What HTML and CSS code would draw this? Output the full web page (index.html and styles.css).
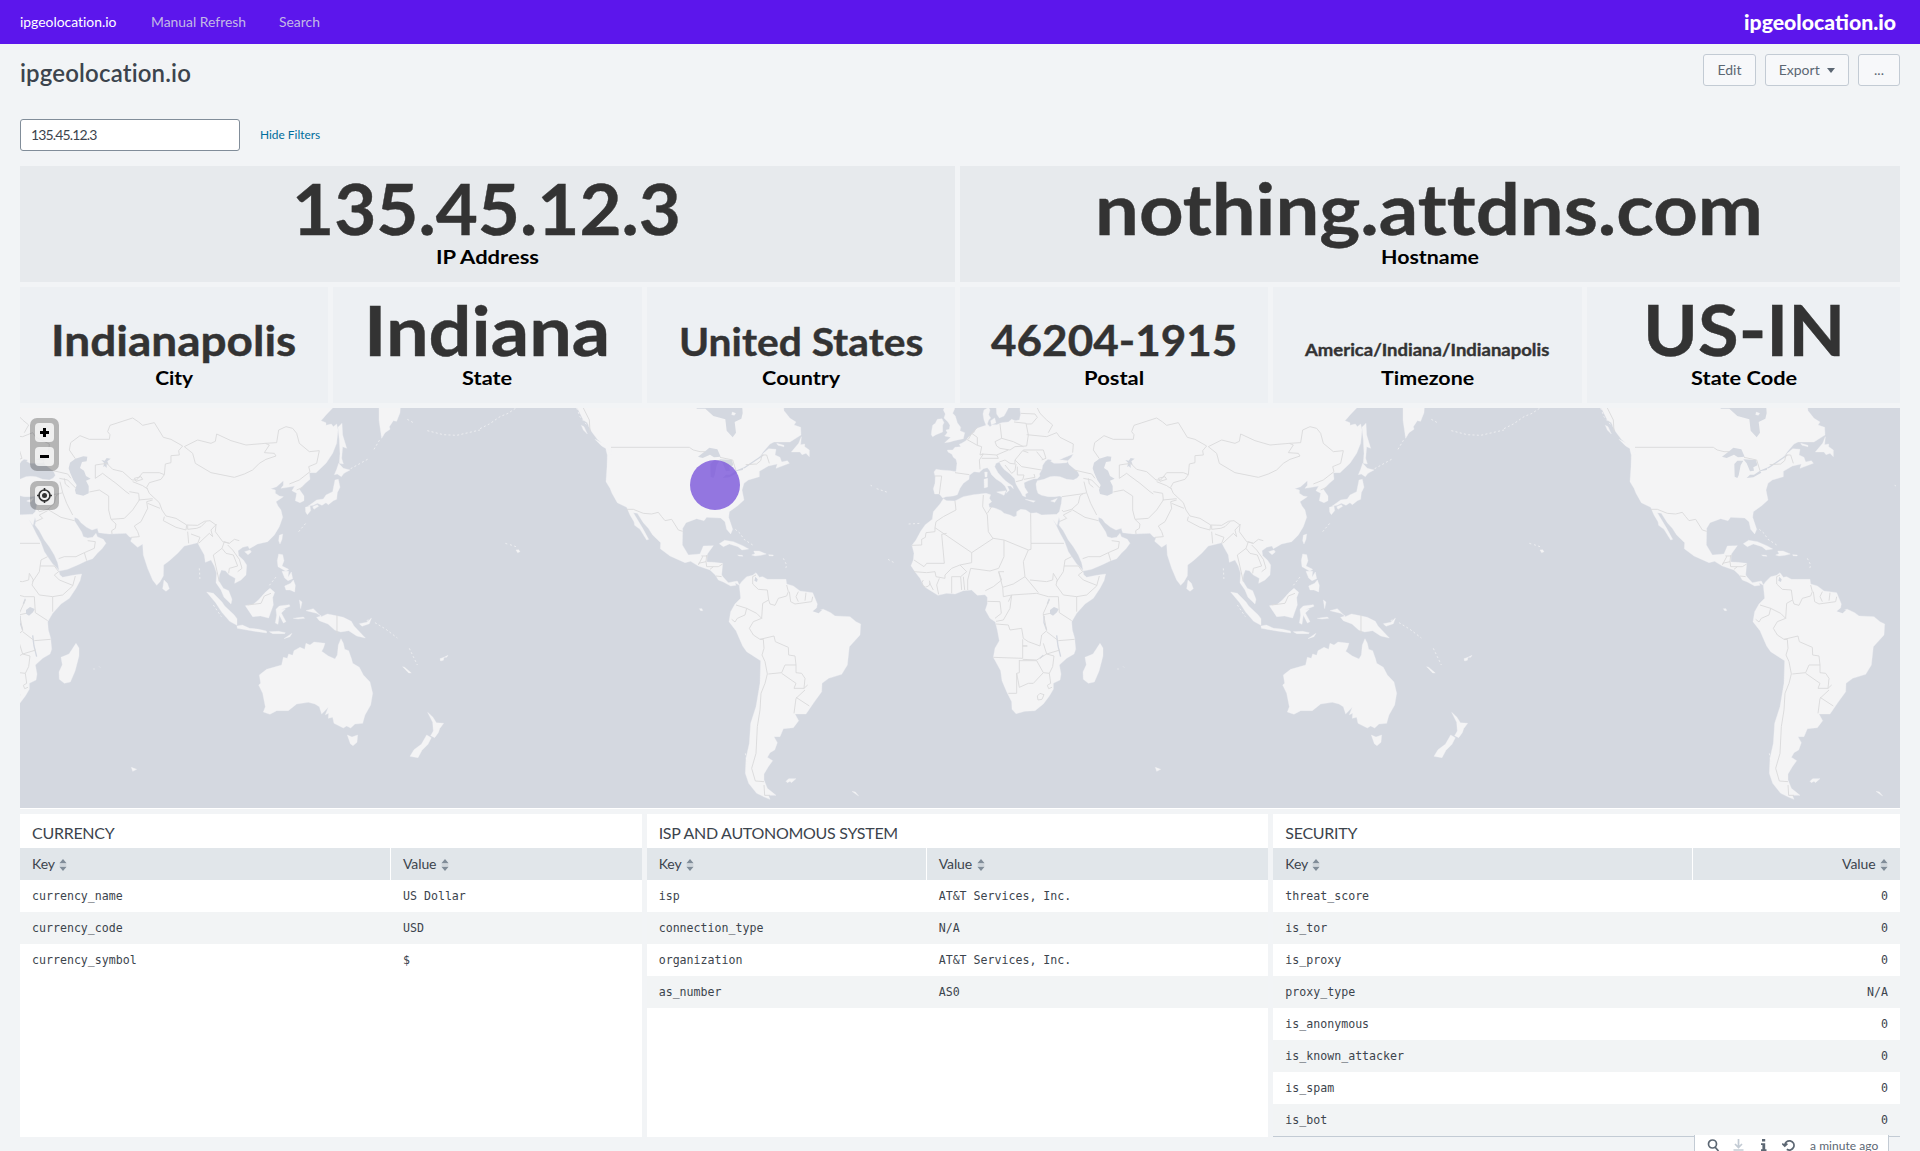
FILE: index.html
```
<!DOCTYPE html>
<html lang="en">
<head>
<meta charset="utf-8">
<title>ipgeolocation.io</title>
<link rel="stylesheet" href="styles.css">
</head>
<body>
<svg class="defs" aria-hidden="true">
  <symbol id="sort" viewBox="0 0 8 12"><path d="M4 0l3.6 4.2H.4zM4 12L.4 7.8h7.2z"/><path d="M.8 5.5h6.4v1H.8z" opacity=".35"/></symbol>
</svg>
<nav class="topbar">
  <a class="nav-item active">ipgeolocation.io</a>
  <a class="nav-item refresh">Manual Refresh</a>
  <a class="nav-item search">Search</a>
  <svg class="logo" width="156" height="28"><text x="0" y="22" textLength="152" lengthAdjust="spacingAndGlyphs">ipgeolocation.io</text></svg>
</nav>
<header class="heading">
  <h1>ipgeolocation.io</h1>
  <div class="actions">
    <button class="btn edit">Edit</button>
    <button class="btn export">Export <i class="caret"></i></button>
    <button class="btn more">...</button>
  </div>
</header>
<div class="filters"><input type="text" value="135.45.12.3"><a>Hide Filters</a></div>

<main>
  <section class="row top">
    <div class="cell"><svg class="single" viewBox="0 0 935 116"><text class="value" font-size="70" x="272" y="69" textLength="389" lengthAdjust="spacingAndGlyphs">135.45.12.3</text><text class="label" x="416" y="98" textLength="103" lengthAdjust="spacingAndGlyphs">IP Address</text></svg></div>
    <div class="cell"><svg class="single" viewBox="0 0 940 116"><text class="value" font-size="70" x="135" y="69" textLength="668" lengthAdjust="spacingAndGlyphs">nothing.attdns.com</text><text class="label" x="421" y="98" textLength="98" lengthAdjust="spacingAndGlyphs">Hostname</text></svg></div>
  </section>
  <section class="row six">
    <div class="cell"><svg class="single" viewBox="0 0 308 115"><text class="value" font-size="41" x="31" y="68.500" textLength="245" lengthAdjust="spacingAndGlyphs">Indianapolis</text><text class="label" x="135" y="97" textLength="38" lengthAdjust="spacingAndGlyphs">City</text></svg></div>
    <div class="cell"><svg class="single" viewBox="0 0 308 115"><text class="value" font-size="68" x="31" y="68.500" textLength="246" lengthAdjust="spacingAndGlyphs">Indiana</text><text class="label" x="129" y="97" textLength="50" lengthAdjust="spacingAndGlyphs">State</text></svg></div>
    <div class="cell"><svg class="single" viewBox="0 0 308 115"><text class="value" font-size="39" x="32" y="68.500" textLength="244" lengthAdjust="spacingAndGlyphs">United States</text><text class="label" x="115" y="97" textLength="78" lengthAdjust="spacingAndGlyphs">Country</text></svg></div>
    <div class="cell"><svg class="single" viewBox="0 0 308 115"><text class="value" font-size="41" x="31" y="68.500" textLength="246" lengthAdjust="spacingAndGlyphs">46204-1915</text><text class="label" x="124" y="97" textLength="60" lengthAdjust="spacingAndGlyphs">Postal</text></svg></div>
    <div class="cell"><svg class="single" viewBox="0 0 308 115"><text class="value" font-size="17.5" x="32" y="68" textLength="244" lengthAdjust="spacingAndGlyphs">America/Indiana/Indianapolis</text><text class="label" x="108" y="97" textLength="93" lengthAdjust="spacingAndGlyphs">Timezone</text></svg></div>
    <div class="cell"><svg class="single" viewBox="0 0 313 115"><text class="value" font-size="70" x="56" y="68.500" textLength="202" lengthAdjust="spacingAndGlyphs">US-IN</text><text class="label" x="104" y="97" textLength="106" lengthAdjust="spacingAndGlyphs">State Code</text></svg></div>
  </section>

  <section class="map">
    <svg class="world" width="1880" height="400" viewBox="0 0 1880 400">
      <defs>
        <g id="world">
          <g class="land">
            <!-- Eurasia and Africa -->
            <path d="M360 10L360 30 362 42 358 60 345 62 335 58 325 66 305 68 290 74 278 74 270 80 262 72 266 60 272 54 266 44 270 30 266 22 252 30 249 42 252 60 258 76 240 82 228 86 224 96 214 104 205 112 198 122 185 130 178 133 182 140 165 142 158 150 142 150 144 156 156 163 160 172 168 178 171 190 168 215 150 212 122 210 108 208 102 216 106 230 105 250 100 266 104 282 118 282 128 294 138 290 160 288 172 284 180 265 190 250 207 238 208 226 222 215 238 217 250 206 262 203 268 210 275 224 288 237 303 247 315 258 322 272 318 280 328 271 322 258 332 258 340 266 338 258 318 244 308 234 294 218 284 200 288 190 298 186 303 196 312 208 330 222 344 236 348 252 355 265 362 276 368 287 377 291 376 282 384 278 374 262 372 248 385 242 402 236 412 236 420 228 418 222 426 208 428 196 436 184 444 178 456 180 452 184 462 190 476 190 500 188 502 182 488 180 478 180 490 174 520 162 514 172 502 184 508 194 520 204 534 216 538 226 532 234 520 240 500 238 480 230 464 229 450 230 432 238 412 242 408 252 410 268 414 280 425 286 445 290 465 290 478 288 486 290 484 310 478 335 470 343 440 344 425 345 410 338 392 340 378 330 362 328 350 335 350 347 342 351 330 345 312 340 304 332 284 324 268 322 266 312 275 305 268 295 272 284 258 280 220 284 190 290 165 303 140 302 130 296 120 312 100 335 97 358 76 374 62 394 48 420 36 436 42 460 40 480 33 497 45 515 60 535 73 560 92 572 114 586 140 580 165 582 190 572 215 570 232 586 255 584 262 592 262 612 256 630 270 655 286 666 292 690 298 722 285 745 280 772 302 812 306 842 320 875 335 905 336 928 348 941 375 934 405 932 430 912 448 888 460 868 460 850 480 840 483 822 478 795 500 775 522 762 527 748 524 715 517 690 515 665 530 640 555 612 580 595 600 565 612 542 617 522 590 526 560 532 551 524 548 510 530 492 515 470 505 455 494 425 480 400 468 375 458 358 471 376 477 352 480 364 477 375 490 392 505 420 520 440 535 465 545 488 550 513 575 508 605 495 632 482 650 476 664 460 678 446 690 430 682 418 664 410 660 400 650 412 635 414 622 410 617 396 608 382 595 362 596 352 606 356 615 368 632 382 648 390 664 385 668 398 700 402 750 400 760 410 768 413 764 424 785 442 800 432 802 465 815 505 830 540 842 556 852 545 862 528 863 495 880 482 905 460 925 438 950 432 965 428 972 442 985 465 988 487 1005 480 1015 498 1022 520 1020 548 1035 570 1044 592 1065 612 1068 598 1058 572 1042 565 1028 542 1030 525 1036 510 1048 512 1060 525 1078 535 1076 550 1095 540 1110 525 1112 495 1102 480 1088 467 1086 452 1100 442 1116 438 1120 446 1145 432 1175 425 1195 405 1210 380 1220 352 1215 330 1206 318 1200 305 1222 290 1210 288 1198 280 1198 270 1184 266 1202 260 1222 242 1222 256 1215 265 1235 262 1256 258 1248 272 1262 280 1258 302 1272 308 1284 302 1284 288 1270 268 1288 250 1302 238 1300 218 1320 218 1350 190 1370 160 1382 130 1386 90 1382 72 1372 80 1366 72 1350 76 1350 68 1335 62 1350 45 1370 24 1372 10z"/>
            <path d="M94 104L95 92 98 76 106 70 112 58 126 56 132 68 128 76 128 96 108 104 98 110zM140 10L130 30 136 42 132 54 144 66 150 76 148 88 138 90 142 98 134 108 152 112 134 128 150 126 162 122 190 116 194 98 180 92 182 82 172 68 166 48 158 40 164 26 160 10zM288 10L290 42 298 54 312 48 320 34 332 10zM272 62l12-8 4 14-14 6zM254 216l8 0-1 15-6 0zM252 238l11-3 0 26-10 3zM290 276l28-4-6 14zM376 298l30 5-6 4zM452 303l20-8-8 12zM864 540l10 10 6 16-10 8-10-8zM600 730l9 14 0 24-12 46-14 32-18 4-15-12-1-22 10-22-4-22 24-10z"/>
            <path d="M992 576l20 4 26 26 8 12 28 26 9 12 0 20-22-12-24-28-18-28zM1083 678l16-3 22 10 24 2 26 6 1 6-42-6-46-8zM1108 617l24-4 16-14 20-22 14-12 14 12-6 16 2 22-8 22-6 17-24-6-24 2zM1200 628l10-10 30-4 2 5-26 10 12-2-12 12 14 26-8 4-12-24-4 28-8-4 4-24zM1208 462l12 2 4 18-6 16 20 10-8 6-24-14-2-18zM1218 514l20 0-2 18 10-16 4 20-14 6-10-8zM1226 558l18-8 8-10 6 16-2 20-14-6-12 0zM1290 632l22-6 12 12 12 12 18-8 20 4 28 6 24 12 8 14 34 36-26-6-24-16-24 4-18-6-20-18-26-10-8-10 14-4-14-8zM1450 671l22-4 14-12-6 16-22 8zM1210 406l10-4-2 16-6 14-4-10zM1106 455l16-5 4 6-10 8zM1180 695l28-1 20 4-2 3-36 0zM1224 716l24-16-6 10zM1252 655l30-4 4 4-20 2zM1270 600l8 6-4 20z"/>
            <g transform="translate(372 0)">
              <path d="M1137 10L1137 60 1145 115 1155 98 1170 88 1168 80 1180 62 1190 64 1200 38 1202 10zM1014 82L1026 70 1028 105 1040 145 1028 140 1025 175 1030 192 1018 190 1020 160 1018 120zM1003 224L1010 208 1016 190 1030 205 1050 210 1032 220 1024 230 1012 222zM1005 240L1015 238 1020 262 1012 278 1010 298 1000 302 985 314 978 308 966 316 952 310 940 316 925 318 950 300 970 297 978 285 998 275zM916 322l14-4 2 14-10 12-5-8zM938 320l14-6 4 5-14 9z"/>
              <path d="M778 825L800 808 845 795 850 772 862 775 866 762 878 766 882 752 900 742 914 748 918 730 930 735 942 726 975 730 970 745 965 754 985 768 1005 777 1012 765 1015 735 1023 716 1030 730 1034 748 1046 752 1055 778 1058 790 1078 802 1090 825 1110 846 1118 880 1112 915 1095 945 1088 970 1065 972 1052 984 1040 978 1030 984 1002 970 998 952 985 955 986 940 976 944 985 922 965 942 958 920 945 912 925 907 890 912 865 932 830 932 810 943 790 936 796 920 788 880 776 855 782 850zM1042 1005l14 6 17-6-2 22-12 10-8-6zM1283 937l16 15 10 16 22 2-12 16-4 12-11 15-12-6 8-14-2-26zM1280 1005l14 8-10 20-18 18-12 22-24-4 12-20 22-16zM1208 800l6 2 20 17-8 0zM1320 776l12-4-2 9-8 2zM1332 772l12-6-4 6zM394 1102l16 6-12 6z"/>
              <path class="isles" d="M1052 206L1072 195 1108 175M1122 148L1140 118M1222 58l18 10M1282 92L1330 104 1370 106 1440 90M1100 662l14-6M1125 668L1158 688 1192 714M1228 745L1240 770 1252 795M896 395l22-26M808 556l24-30M598 505l2 36M640 615l24 35M280 807l4 0M298 800l2 2"/>
            </g>
          </g>
          <g class="water">
            <path d="M582 188L598 176 622 169 634 170 632 184 618 186 612 204 624 212 630 228 644 236 630 242 638 258 638 280 622 287 600 282 597 270 602 255 592 240 583 220 578 205zM676 180l10 2 6-8 12 2-10 8 4 10-6-2 0 12-6-6-4 4 2-14zM450 630l12-9 14 6-5 10-12 10-9-6z"/>
            <path class="lake" d="M432 648L432 668 440 690M470 706L474 738 482 770M448 596L442 612M420 775L430 766"/>
          </g>
          <path class="border" d="M598 176L580 150 584 128 612 107 640 118 700 118 702 104 695 95 702 76 770 54 788 66 800 76 835 68 862 112 885 118 920 138 908 152 910 165 885 167 885 188 868 192 865 224 850 218 800 218 782 240 768 240 740 215 710 208 692 190 658 195 658 235 680 220 690 228 720 250 750 275 760 282M925 140L965 120 1005 130 1018 124 1022 102 1065 122 1110 135 1168 130 1180 135 1165 158 1195 160 1200 168 1170 178 1150 190 1130 210 1105 222 1075 232 1005 218 958 190 950 160 925 140M1168 130L1202 128 1208 90 1230 80 1250 85 1262 100 1270 130 1300 155 1330 152 1322 190 1298 200 1302 215 1270 240 1240 252M865 224L855 238 820 248 812 262 820 280 850 308 858 330 870 348 900 355 932 375 965 376 985 364 1002 362 1020 375 1018 395 1040 425 1060 430 1075 418 1090 422"/>
          <path class="border" d="M640 276L670 270 698 288 698 330 705 358 720 372 718 385 707 392 708 402M705 358L745 355 770 330 790 300 788 280 760 275M788 300L830 296M770 245l30 12 15 10M775 235l20-5 5 8-20 6zM830 300L812 305 815 325 795 365 775 378 785 395 790 410 765 412M852 325L815 310M865 350L862 362 900 382 930 390 932 375M935 376L935 388 962 385 975 380 990 365M935 395L938 430M965 430L972 412 945 402M1022 372L1005 390 1010 410 1000 400 968 430M1030 545L1020 500 1012 465 1038 445 1045 425 1060 430M1038 445L1050 460 1072 465 1085 498 1060 505 1058 520M1055 435L1070 450 1090 478 1098 505 1085 515M1115 615L1155 610 1165 588 1185 580M1383 645L1383 700M1262 270L1280 262M486 330L490 335 515 328 555 352 595 362M515 328L535 310 540 288 550 280M515 332L490 345 500 355 480 364M548 476L565 470 600 470 625 458 655 445 658 425 635 422M625 458L632 482M486 290L550 281 560 278 572 310 590 345M522 210L575 222 585 235M550 235L575 240 600 265M552 245L560 278M565 235L568 252 580 262"/>
          <path class="border" d="M392 340L393 430 492 430M393 430L393 448 385 450 312 420 280 415 215 458 105 383 105 395 78 398 76 412 65 418 65 435 36 436M280 417L265 395 262 345 248 320 250 285M262 340L275 320M165 303L168 330 130 350 108 365 105 383M125 403L133 490 80 490 72 500 42 480M125 403L140 400M215 458L215 488 180 495 155 505 135 525 135 535 108 530 105 515 80 518 42 515M312 420L312 470 296 505 270 513 212 505 203 540 203 570M180 495L200 515 182 530 155 530 155 580M182 530L185 570M190 530L194 570M116 583L110 555 118 535M70 540a12 12 0 1 0 18 2M88 548L100 570M385 450L370 485 375 530 340 552 308 562 296 515 312 515M296 515L305 540 280 560 256 572M308 562L310 590 335 585M262 604L300 605 304 640 285 655M325 605L335 585 410 580 445 590 475 590M375 530L415 578M390 540L440 545 458 540 460 520 472 540 468 555 490 585 530 590 560 585 590 558 598 528M492 498L535 498 548 515 535 525 550 540 590 556M515 470L495 480 490 515 470 545M530 590L530 635M475 590L478 638 515 662M335 585L330 625 310 660 288 664M288 672L325 675 330 690 365 685 370 715 385 725 420 738 425 705 440 692 430 640 448 600M428 645L450 640M368 718L368 738 382 738 368 738 368 775 280 772M368 778L410 780 440 762 430 730M358 780L358 818 350 820 350 880 325 880M350 820L358 862 385 850 400 850 430 818 410 782 358 782M440 762L462 768 458 800 448 820 430 818M448 820L452 850 442 856 446 866 456 862M440 695L475 722 524 718M440 762L480 750M412 888l8-8 12 4-6 14-12 2z"/>
          <path class="border" d="M300 72L305 115 285 125 290 138 300 145 330 150 345 140 380 138 385 105 378 70 342 66M362 40L405 42 412 52 395 72 378 72M380 104L440 110 470 98 480 112 520 132 518 158M412 24L420 40 440 60 458 75 445 98M305 115L340 125 370 140M370 150L430 150 438 175 425 180M200 118L232 136M235 80L215 100 205 118M215 100L232 112 232 136 245 140 240 165 250 162 238 180 240 208M245 162L290 165 325 150M290 165L295 175 245 175M165 218L208 224M105 228L125 228 118 282M298 186L315 180 330 190 345 192 345 180 368 152 385 158M315 195L335 220 345 212 348 192M345 180L365 200 425 210M352 200L352 225 372 225 368 240 348 245M372 238L405 232 402 222M410 155L430 180"/>
          <g transform="translate(-1260 0)">
            <g class="land">
              <path d="M282 10L295 30 310 60 322 68 335 95 352 118 378 140 378 150 382 165 381 200 378 245 390 265 396 280 412 308 440 322 450 345 462 365 464 376 480 388 500 420 506 418 488 385 470 355 460 338 472 340 490 368 505 385 518 405 542 428 541 446 570 468 615 488 632 484 655 498 690 510 706 525 715 540 730 546 752 558 768 556 765 548 778 556 782 595 765 612 752 635 747 665 768 692 788 738 800 755 842 782 840 850 828 920 812 970 808 1030 798 1075 796 1120 806 1150 830 1180 855 1192 870 1198 865 1186 888 1186 862 1165 852 1140 852 1122 865 1100 878 1082 862 1072 870 1058 884 1050 892 1028 882 1010 900 1010 910 986 940 983 956 962 945 942 978 942 1000 910 1025 875 1026 850 1046 835 1085 823 1102 795 1108 740 1140 705 1142 672 1128 665 1110 650 1065 648 1052 638 1030 628 1008 632 1012 612 998 578 960 573 940 558 920 552 918 538 880 538 862 538 848 530 838 532 828 518 818 526 800 530 785 545 778 555 772 543 745 548 730 532 725 525 728 490 700 487 680 486 682 462 700 437 670 438 660 462 625 465 607 435 608 385 618 368 650 356 672 362 680 352 722 354 735 365 740 388 752 402 758 388 746 352 748 335 772 318 792 300 786 270 792 250 805 240 838 230 838 214 865 198 892 192 888 205 928 190 922 182 905 186 900 172 885 165 888 148 866 146 850 160 835 176 850 155 870 132 882 126 930 126 952 112 963 105 962 82 942 75 948 66 930 55 912 32 910 10z"/>
              <path d="M964 110L956 130 934 156 960 156 966 164 978 160 988 170 988 150 974 140 974 132 962 134zM345 118l20 10 30 20-2 18-8-16-20-12zM304 76l8 4 10 22-12-12zM890 130l22 6 0 4-18-4zM718 431l16-10 26 4 28 12 18 10-20 3-12-10-26-8-18 8zM815 465l10-4-4-8 16 0 22 9-16 4-18 2zM773 465l14 1 2 3-12-1zM866 464l14 1-1 3-12-1zM918 1144l8-8 22 0-14 12-4-4-8 4zM1116 1174l10 2 10 12-12-8zM108 450l8-1 4 6-7 3zM658 626l8 0 2 6-6 0z"/>
              <path class="isles" d="M0 86L28 72 60 50 84 40 108 24M76 430l6 2M90 434l24 8M766 388L780 400 792 418 818 435M910 475L920 495 916 510M290 24L300 50 318 72 340 90M796 1060L810 1130M1172 256l4 2M1190 266l36 12M1286 372l36-2M1224 478l22 12"/>
            </g>
            <g class="water">
              <path d="M650 10L650 26 676 26 700 48 736 58 740 92 758 112 768 98 764 66 784 56 788 40 786 10zM654 170L680 150 688 143 712 148 722 170 702 172 690 164 668 174zM691 192L700 182 718 182 710 196 704 226 700 234 692 230zM718 178L756 180 760 196 748 202 750 212 738 214 728 190zM728 234L738 224 750 224 768 212 772 218 748 232zM766 212L792 202 788 210 768 214zM826 530l7 8-2 8-8-4zM998 634l12-10 16 6-10 10z"/>
              <path class="lake" d="M792 204L850 165"/>
            </g>
            <path class="land" d="M757 36l10 4-4 6-8-2z"/>
            <path class="border" d="M393 142L628 142 640 150 660 155 675 155M720 172L758 180 768 212M797 194L830 192 842 182 846 165 860 165 868 190M440 328L460 328 490 340 515 342 535 337 545 350 555 362 575 358 595 390 608 394M330 95L328 60 310 24M655 495L668 470 665 468 685 468M680 465L678 485 655 490M678 485L680 500 715 500 728 492M690 508L700 500M708 528L725 530M828 525L818 530 818 552 835 568 862 570 866 600 848 610 845 655 830 640 800 625 768 615M800 625L795 645 772 655 765 666 755 658M866 600L870 612 885 616 895 595 920 588 925 575 920 555M928 575L932 605 945 612 995 605 998 590M955 575L948 590 955 605M978 578L975 602M845 655L820 665 808 685 820 705 840 718 850 718 852 745 846 765 855 785 862 822M840 718L882 708 886 725 925 742 926 765 945 768 948 795 915 795 905 818 865 822M948 795L948 818 965 820 975 835 972 865 942 865 948 850 905 820M972 865L983 855M975 870L948 895 942 940M948 892L988 918M862 822L855 850 843 880 840 930 832 980 828 1060 815 1105 826 1143 852 1145M852 1155L854 1186 870 1186"/>
          </g>
        </g>
      </defs>
      <use href="#world" transform="translate(-144 -8) scale(.33333)"/>
      <use href="#world" transform="translate(880 -8) scale(.33333)"/>
      <use href="#world" transform="translate(1904 -8) scale(.33333)"/>
      <circle cx="695" cy="77" r="25" fill="#7a56db" fill-opacity=".8"/>
    </svg>
    <div class="controls">
      <div class="control-group"><b><svg viewBox="0 0 19 19"><path d="M9.5 5v9M5 9.500h9"/></svg></b><b><svg viewBox="0 0 19 19"><path d="M5 9.500h9"/></svg></b></div>
      <div class="control-group"><b><svg class="locate" viewBox="0 0 19 19"><circle cx="9.500" cy="9.500" r="5.500"/><path d="M9.500 2v3M9.500 14v3M2 9.500h3M14 9.500h3"/><circle class="dot" cx="9.500" cy="9.500" r="2.500"/></svg></b></div>
    </div>
  </section>

  <section class="row tables">
    <div class="panel currency">
      <h2>CURRENCY</h2>
      <table>
        <tr><th>Key <svg><use href="#sort"/></svg></th><th>Value <svg><use href="#sort"/></svg></th></tr>
        <tr><td>currency_name</td><td>US Dollar</td></tr>
        <tr><td>currency_code</td><td>USD</td></tr>
        <tr><td>currency_symbol</td><td>$</td></tr>
      </table>
    </div>
    <div class="panel isp">
      <h2>ISP AND AUTONOMOUS SYSTEM</h2>
      <table>
        <tr><th>Key <svg><use href="#sort"/></svg></th><th>Value <svg><use href="#sort"/></svg></th></tr>
        <tr><td>isp</td><td>AT&amp;T Services, Inc.</td></tr>
        <tr><td>connection_type</td><td>N/A</td></tr>
        <tr><td>organization</td><td>AT&amp;T Services, Inc.</td></tr>
        <tr><td>as_number</td><td>AS0</td></tr>
      </table>
    </div>
    <div class="panel security">
      <h2>SECURITY</h2>
      <table>
        <tr><th>Key <svg><use href="#sort"/></svg></th><th>Value <svg><use href="#sort"/></svg></th></tr>
        <tr><td>threat_score</td><td>0</td></tr>
        <tr><td>is_tor</td><td>0</td></tr>
        <tr><td>is_proxy</td><td>0</td></tr>
        <tr><td>proxy_type</td><td>N/A</td></tr>
        <tr><td>is_anonymous</td><td>0</td></tr>
        <tr><td>is_known_attacker</td><td>0</td></tr>
        <tr><td>is_spam</td><td>0</td></tr>
        <tr><td>is_bot</td><td>0</td></tr>
      </table>
      <div class="toolbar">
        <svg width="13" height="13" viewBox="0 0 13 13"><circle cx="5.500" cy="5" r="4" /><path d="M8 8l3.500 4"/></svg>
        <svg class="dim" width="13" height="13" viewBox="0 0 13 13"><path d="M6.500 0v8M3 5l3.500 3.500L10 5M1.500 11h10"/></svg>
        <svg class="info" width="13" height="13" viewBox="0 0 13 13"><path d="M5 0h3.200v2.600H5zM4 4.200h4.200v6H9.500V12H4v-1.800h1.400V6H4z"/></svg>
        <svg width="13" height="13" viewBox="0 0 13 13"><path d="M2.800 6.500a4.600 4.600 0 1 1 2 3.700M.3 4.500l2.500 2.600 2.600-2.400"/></svg>
        <span>a minute ago</span>
      </div>
    </div>
  </section>
</main>
</body>
</html>
```
FILE: styles.css
```
* { box-sizing: border-box; }
html, body { margin: 0; height: 1151px; overflow: hidden; }
body { background: #f2f4f6; color: #3c444d; font: 14px/20px Lato, "Open Sans", sans-serif; font-variant-ligatures: none; }
.defs { display: none; }
.topbar { height: 44px; padding: 0 20px; background: #5c16ec; display: flex; align-items: center; }
.nav-item { color: #c3b9e6; font-size: 13.900px; white-space: nowrap; }
.nav-item.active { color: #fff; width: 131px; }
.nav-item.refresh { width: 128px; }
.logo { margin-left: auto; }
.logo text { font: 900 20px Lato, sans-serif; fill: #fff; }
.heading { height: 75px; padding: 10px 20px 0; display: flex; justify-content: space-between; }
h1 { margin: 3px 0 0; font-size: 24px; line-height: 32px; font-weight: 600; letter-spacing: .16px; }
.actions { display: flex; gap: 9px; }
.btn { height: 32px; padding: 0 0 1px; border: 1px solid #c3cbd4; border-radius: 3px; background: #f7f8fa; color: #5c6773; font: 14px Lato, sans-serif; }
.edit { width: 53px; }
.export { width: 84px; }
.more { width: 42px; }
.caret { display: inline-block; margin: 0 0 2px 4px; border: 4px solid transparent; border-top: 5px solid #5c6773; border-bottom: 0; }
.filters { height: 47px; padding: 0 20px; display: flex; gap: 20px; align-items: flex-start; }
.filters input { width: 220px; height: 32px; padding: 0 10px 1px; border: 1px solid #818d99; border-radius: 3px; background: #fff; color: #3c444d; font: 14px Lato, sans-serif; letter-spacing: -.85px; }
.filters a { color: #006d9c; font-size: 11.900px; line-height: 32px; }
main { padding: 0 20px; }
.row { display: flex; }
.cell { flex: 1 1 0; margin-right: 5px; background: #edf0f3; }
.cell:last-child { flex-basis: 5px; margin-right: 0; }
.top { height: 116px; margin-bottom: 5px; }
.top .cell { background: #e7eaed; }
.six { height: 116px; margin-bottom: 5px; }
.single { display: block; width: 100%; height: 100%; }
.value { font-family: Lato, sans-serif; font-weight: 700; fill: #333; stroke: #333; stroke-width: .4; }
.label { font: 700 19.500px Lato, sans-serif; fill: #000; }
.map { position: relative; height: 401px; border-bottom: 1px solid #fff; background: #d4d8e0; margin-bottom: 5px; }
.world { display: block; }
.land { fill: #f4f4f5; stroke: #f4f4f5; stroke-width: 1; stroke-linejoin: round; }
.isles { fill: none; stroke-width: 3; stroke-dasharray: 6 7; opacity: .75; }
.water { fill: #d4d8e0; }
.lake { fill: none; stroke: #d4d8e0; stroke-width: 4; }
.border { fill: none; stroke: #dadadc; stroke-width: 2.800; stroke-linejoin: round; }
.controls { position: absolute; left: 10px; top: 10px; display: grid; gap: 10px; }
.control-group { width: 29px; padding: 5px; display: grid; gap: 5px; border-radius: 7px; background: rgba(0, 0, 0, .26); }
.control-group b { display: block; width: 19px; height: 19px; border-radius: 4px; background: rgba(255, 255, 255, .78); }
.control-group svg { display: block; fill: none; stroke: #000; stroke-width: 3; }
.control-group .locate { stroke: #333; stroke-width: 1.600; }
.locate .dot { fill: #333; stroke: none; }
.panel { flex: 1 1 0; height: 323px; margin-right: 5px; background: #fff; }
.panel:last-child { flex-basis: 5px; margin-right: 0; }
h2 { margin: 0; height: 34px; padding: 10px 12px 0; font-size: 16px; line-height: 18px; font-weight: 400; letter-spacing: -.28px; }
table { width: 100%; table-layout: fixed; border-collapse: separate; border-spacing: 0; }
tr { height: 32px; }
th, td { padding: 0 12px; text-align: left; white-space: nowrap; }
th { background: #e1e6ea; font-weight: 400; letter-spacing: -.1px; }
th + th { border-left: 1px solid #fff; }
th svg { width: 8px; height: 12px; margin-left: 1px; fill: #818d99; vertical-align: -2px; }
td { font: 11.600px "DejaVu Sans Mono", monospace; }
td + td { padding-left: 13px; }
tr:nth-child(odd) td { background: #f2f4f5; }
.currency th:first-child { width: 370px; }
.isp th:first-child { width: 279px; }
.security th:first-child { width: 419px; }
.security td:last-child, .security th:last-child { text-align: right; }
.security { position: relative; border-bottom: 1px solid #c3cbd4; }
.toolbar { position: absolute; right: 11px; top: 321px; width: 195px; height: 30px; padding: 4px 10px 0 12px; display: flex; gap: 12px; background: #fff; border: 1px solid #c3cbd4; border-top: 0; font-size: 12px; line-height: 13px; color: #5c6773; white-space: nowrap; }
.toolbar svg { flex: none; fill: none; stroke: #5c6773; stroke-width: 1.700; }
.toolbar .dim { stroke: #c3cbd4; }
.toolbar .info { fill: #5c6773; stroke: none; }
.toolbar span { margin-left: 3px; letter-spacing: .05px; }
```
